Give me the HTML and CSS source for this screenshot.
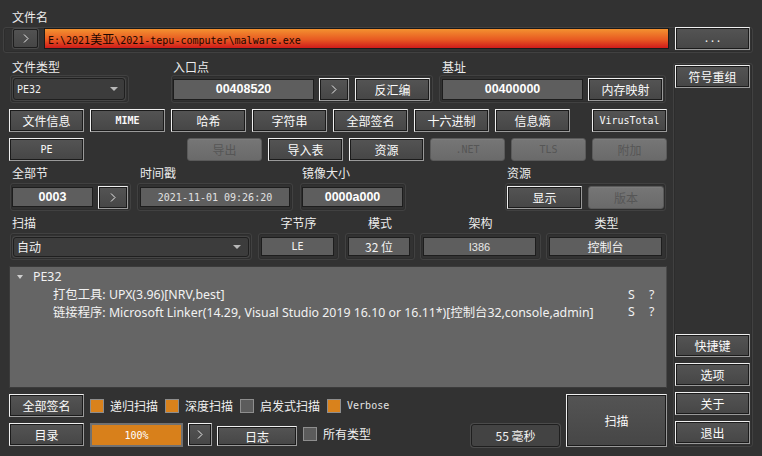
FILE: index.html
```html
<!DOCTYPE html>
<html>
<head>
<meta charset="utf-8">
<link rel="stylesheet" href="styles.css">
</head>
<body>
<div class="app">
  <div class="lbl top-lbl">文件名</div>
  <div class="frame path-frame">
    <div class="sbtn"><svg width="6" height="9" viewBox="0 0 6 9"><polyline points="1,0.5 5,4.5 1,8.5" fill="none" stroke="#e8e8e8" stroke-width="1"/></svg></div>
    <div class="path">E:\2021<span class="cj">美亚</span>\2021-tepu-computer\malware.exe</div>
    <div class="btn dots mono">...</div>
  </div>

  <div class="main">
    <div class="left">
      <!-- row 2 -->
      <div class="row r2">
        <div class="grp g2a">
          <div class="glbl pl2">文件类型</div>
          <div class="frame fr28">
            <div class="combo c-pe"><span class="mono">PE32</span><i class="arrow"></i></div>
          </div>
        </div>
        <div class="grp g2b">
          <div class="glbl pl2">入口点</div>
          <div class="frame fr28">
            <div class="field f-ep">00408520</div>
            <div class="btn chev"><svg width="6" height="9" viewBox="0 0 6 9"><polyline points="1,0.5 5,4.5 1,8.5" fill="none" stroke="#e8e8e8" stroke-width="1"/></svg></div>
            <div class="btn b-dis">反汇编</div>
          </div>
        </div>
        <div class="grp g2c">
          <div class="glbl pl3">基址</div>
          <div class="frame fr28">
            <div class="field f-base">00400000</div>
            <div class="btn b-mem">内存映射</div>
          </div>
        </div>
      </div>

      <!-- row 3 -->
      <div class="row r3">
        <div class="btn">文件信息</div>
        <div class="btn mono bold">MIME</div>
        <div class="btn">哈希</div>
        <div class="btn">字符串</div>
        <div class="btn">全部签名</div>
        <div class="btn">十六进制</div>
        <div class="btn">信息熵</div>
        <div class="btn mono vt">VirusTotal</div>
      </div>

      <!-- row 4 -->
      <div class="row r4">
        <div class="btn mono pe">PE</div>
        <div class="btn dis">导出</div>
        <div class="btn">导入表</div>
        <div class="btn">资源</div>
        <div class="btn dis mono">.NET</div>
        <div class="btn dis mono">TLS</div>
        <div class="btn dis">附加</div>
      </div>

      <!-- row 5 -->
      <div class="row r5">
        <div class="grp g5a">
          <div class="glbl gl17 pl2">全部节</div>
          <div class="frame fr28">
            <div class="field f-sec">0003</div>
            <div class="btn chev c5"><svg width="6" height="9" viewBox="0 0 6 9"><polyline points="1,0.5 5,4.5 1,8.5" fill="none" stroke="#e8e8e8" stroke-width="1"/></svg></div>
          </div>
        </div>
        <div class="grp g5b">
          <div class="glbl gl17 pl3">时间戳</div>
          <div class="frame fr28">
            <div class="field f-time mono">2021-11-01 09:26:20</div>
          </div>
        </div>
        <div class="grp g5c">
          <div class="glbl gl17 pl2">镜像大小</div>
          <div class="frame fr28">
            <div class="field f-img">0000a000</div>
          </div>
        </div>
        <div class="grp g5d">
          <div class="glbl gl17 pl2">资源</div>
          <div class="frame fr28">
            <div class="btn b-show">显示</div>
            <div class="btn dis b-ver">版本</div>
          </div>
        </div>
      </div>

      <!-- row 6 -->
      <div class="row r6">
        <div class="grp g6a">
          <div class="glbl gl17 pl2">扫描</div>
          <div class="frame fr27">
            <div class="combo c-auto"><span>自动</span><i class="arrow"></i></div>
          </div>
        </div>
        <div class="grp g6b">
          <div class="glbl gl17 ctr">字节序</div>
          <div class="frame fr27"><div class="field sm mono">LE</div></div>
        </div>
        <div class="grp g6c">
          <div class="glbl gl17 ctr">模式</div>
          <div class="frame fr27"><div class="field sm">32 位</div></div>
        </div>
        <div class="grp g6d">
          <div class="glbl gl17 ctr">架构</div>
          <div class="frame fr27"><div class="field sm arch">I386</div></div>
        </div>
        <div class="grp g6e">
          <div class="glbl gl17 ctr">类型</div>
          <div class="frame fr27"><div class="field sm">控制台</div></div>
        </div>
      </div>

      <!-- tree -->
      <div class="tree">
        <div class="trow"><i class="tri"></i><span class="tname">PE32</span></div>
        <div class="trow child"><span class="ttext">打包工具: UPX(3.96)[NRV,best]</span><span class="ts">S</span><span class="tq">?</span></div>
        <div class="trow child"><span class="ttext">链接程序: Microsoft Linker(14.29, Visual Studio 2019 16.10 or 16.11*)[控制台32,console,admin]</span><span class="ts">S</span><span class="tq">?</span></div>
      </div>

      <!-- bottom -->
      <div class="bottom">
        <div class="bleft">
          <div class="brow ra">
            <div class="btn">全部签名</div>
            <i class="cb on"></i><span class="cbl">递归扫描</span>
            <i class="cb on"></i><span class="cbl">深度扫描</span>
            <i class="cb"></i><span class="cbl">启发式扫描</span>
            <i class="cb on"></i><span class="cbl mono">Verbose</span>
          </div>
          <div class="brow rb">
            <div class="btn">目录</div>
            <div class="prog mono">100%</div>
            <div class="btn chev cb2"><svg width="6" height="9" viewBox="0 0 6 9"><polyline points="1,0.5 5,4.5 1,8.5" fill="none" stroke="#e8e8e8" stroke-width="1"/></svg></div>
            <div class="btn b-log">日志</div>
            <i class="cb cb-all"></i><span class="cbl">所有类型</span>
            <div class="ms">55 毫秒</div>
          </div>
        </div>
        <div class="btn scan">扫描</div>
      </div>
    </div>

    <div class="frame right">
      <div class="btn">符号重组</div>
      <div class="spacer"></div>
      <div class="btn">快捷键</div>
      <div class="btn">选项</div>
      <div class="btn">关于</div>
      <div class="btn">退出</div>
    </div>
  </div>
</div>
</body>
</html>
```

FILE: styles.css
```css
* { box-sizing: border-box; }
html, body { margin: 0; padding: 0; }
body {
  background: #323232;
  width: 762px;
  height: 456px;
  overflow: hidden;
  font-family: "Noto Sans CJK SC", "Liberation Sans", sans-serif;
  font-size: 12px;
  color: #ececec;
}
.app { padding-top: 9px; }
.lbl { line-height: 15px; height: 15px; }
.top-lbl { padding-left: 12px; }

.mono { font-family: "DejaVu Sans Mono", "Liberation Mono", "Noto Sans CJK SC", monospace; font-size: 10px; }
.bold { font-weight: bold; }

.frame {
  border: 1px solid #414141;
  border-radius: 3px;
  box-shadow: inset 0 0 0 1px #2d2d2d;
}

.path-frame {
  margin: 3px 0 0 3px;
  width: 750px;
  height: 26px;
  display: flex;
  align-items: flex-start;
}
.sbtn {
  margin: 1px 0 0 9px;
  width: 25px;
  height: 19px;
  border: 1px solid #1e1e1e;
  border-radius: 2px;
  background: linear-gradient(#525252, #464646);
  box-shadow: 0 0 0 1px #4a4a4a;
  display: flex; align-items: center; justify-content: center;
}
.path {
  margin-left: 6px;
  width: 625px;
  height: 21px;
  border: 1px solid #1a1a1a;
  background: linear-gradient(#f39130, #e85a22 55%, #cf1b1b);
  color: #1c0600;
  font-family: "DejaVu Sans Mono", "Liberation Mono", monospace;
  font-size: 10px;
  line-height: 19px;
  padding-left: 3px;
  white-space: nowrap;
}
.path .cj { font-family: "Noto Sans CJK SC", sans-serif; font-size: 12px; }
.dots { margin: -1px 0 0 6px; }

.btn {
  width: 75px;
  height: 23px;
  border: 1px solid;
  border-color: #f0f0f0 #9a9a9a #9a9a9a #f0f0f0;
  box-shadow: inset 0 0 0 1px #1b1b1b;
  background: linear-gradient(#545454, #464646);
  color: #fafafa;
  display: flex;
  align-items: center;
  justify-content: center;
  flex: none;
  white-space: nowrap;
}
.btn.dis {
  border: 1px solid #5a5a5a;
  border-radius: 3px;
  box-shadow: inset 0 1px 0 #7c7c7c;
  background: linear-gradient(#767676, #6a6a6a);
  color: #565656;
}
.btn.chev { width: 30px; }

.main { display: flex; align-items: flex-start; }
.left { margin-left: 9px; width: 658px; padding-top: 7px; display: flex; flex-direction: column; }
.right {
  margin: 10px 0 0 6px;
  width: 80px;
  height: 384px;
  display: flex;
  flex-direction: column;
  padding: 1px 0 2px 1px;
  gap: 6px;
}
.right .spacer { flex: 1; margin-top: -6px; }

.row { display: flex; align-items: flex-start; }
.grp { display: flex; flex-direction: column; flex: none; }
.glbl { height: 15px; line-height: 14px; white-space: nowrap; }
.gl17 { height: 17px; }
.pl2 { padding-left: 2px; }
.pl3 { padding-left: 3px; }
.ctr { text-align: center; }

.fr28 { height: 28px; display: flex; align-items: center; }
.fr27 { height: 27px; display: flex; align-items: center; }

.g2a { margin-left: 1px; width: 119px; }
.g2b { margin-left: 42px; width: 262px; }
.g2c { margin-left: 6px; width: 227px; }

.combo {
  height: 22px;
  border: 1px solid #1f1f1f;
  border-radius: 3px;
  background: #3c3c3c;
  box-shadow: 0 0 0 1px #464646;
  display: flex;
  align-items: center;
  padding-left: 3px;
  position: relative;
  color: #f0f0f0;
}
.c-pe { margin-left: 2px; width: 112px; }
.arrow {
  position: absolute;
  right: 6px;
  top: 8px;
  width: 0; height: 0;
  border-left: 4px solid transparent;
  border-right: 4px solid transparent;
  border-top: 4px solid #b8b8b8;
}

.field {
  height: 21px;
  border: 1px solid #1d1d1d;
  background: #5e5e5e;
  color: #fff;
  font-family: "Liberation Sans", sans-serif;
  font-weight: bold;
  font-size: 12.5px;
  display: flex;
  align-items: center;
  justify-content: center;
  flex: none;
}
.f-ep { margin-left: 1px; width: 141px; }
.g2b .chev { margin-left: 5px; }
.b-dis { margin-left: 6px; }
.f-base { margin-left: 2px; width: 141px; }
.b-mem { margin-left: 5px; }

.r3 { margin-top: 6px; gap: 6px; }
.r3 .vt { margin-left: auto; }
.r4 { margin-top: 6px; gap: 6px; justify-content: flex-end; }
.r4 .pe { margin-right: auto; }

.r5 { margin-top: 5px; }
.g5a { margin-left: 1px; width: 121px; }
.g5b { margin-left: 6px; width: 156px; }
.g5c { margin-left: 7px; width: 106px; }
.g5d { margin-left: 99px; width: 161px; }
.f-sec { margin-left: 1px; width: 81px; height: 20px; }
.c5 { margin-left: 5px; }
.f-time { margin-left: 2px; width: 150px; height: 20px; font-weight: normal; color: #e2e2e2; font-family: "DejaVu Sans Mono", monospace; font-size: 10px; }
.f-img { margin-left: 1px; width: 101px; height: 20px; }
.b-show { margin-left: 1px; }
.b-ver { margin-left: 6px; width: 76px; }

.r6 { margin-top: 5px; }
.g6a { margin-left: 1px; width: 242px; }
.g6b { margin-left: 6px; width: 81px; }
.g6c { margin-left: 6px; width: 70px; }
.g6d { margin-left: 5px; width: 121px; }
.g6e { margin-left: 5px; width: 121px; }
.c-auto { margin-left: 2px; width: 236px; height: 20px; }
.c-auto .arrow { top: 7px; right: 7px; }
.field.sm {
  margin-left: 2px;
  width: calc(100% - 6px);
  height: 19px;
  font-family: "Noto Sans CJK SC", sans-serif;
  font-weight: normal;
  font-size: 12px;
  color: #f4f4f4;
}
.field.sm.mono { font-family: "DejaVu Sans Mono", monospace; font-size: 10px; }
.field.arch { font-family: "Liberation Sans", sans-serif; font-size: 11px; color: #e8e8e8; }

.tree {
  margin-top: 6px;
  height: 122px;
  background: #656565;
  border: 1px solid #3b3b3b;
  border-right-color: #4a4a4a;
  padding-top: 1px;
  font-family: "Noto Sans", "Noto Sans CJK SC", sans-serif;
  font-size: 12.35px;
  color: #f2f2f2;
}
.trow { height: 17.5px; display: flex; align-items: center; white-space: nowrap; }
.tri {
  margin-left: 7px;
  width: 0; height: 0;
  border-left: 3px solid transparent;
  border-right: 3px solid transparent;
  border-top: 4px solid #cfcfcf;
}
.tname { margin-left: 10px; }
.child { padding-left: 43px; padding-right: 10px; }
.ttext { flex: 1; }
.ts { width: 21px; }
.tq { width: 7px; }

.bottom { margin-top: 6px; display: flex; align-items: flex-start; }
.bleft { width: 551px; display: flex; flex-direction: column; }
.brow { display: flex; align-items: center; }
.ra { height: 23px; }
.rb { margin-top: 6px; height: 25px; align-items: flex-start; }
.cb {
  width: 14px; height: 14px;
  border: 1px solid #8e8e8e;
  background: #5c5c5c;
  flex: none;
  margin-left: 6px;
}
.cb.on { background: #d9821c; }
.ra .cb { margin-left: 7px; }
.ra .btn + .cb { margin-left: 6px; }
.cbl { margin-left: 6px; white-space: nowrap; color: #f0f0f0; }
.cbl.mono { color: #e4e4e4; }

.prog {
  margin-left: 6px;
  width: 93px;
  height: 24px;
  border: 2px solid #717171;
  background: #d8801b;
  color: #fff;
  display: flex;
  align-items: center;
  justify-content: center;
}
.btn.cb2 { margin-left: 5px; width: 24px; }
.b-log { margin: 3px 0 0 5px; width: 80px; height: 20px; }
.cb-all { margin-top: 4px; margin-left: 6px; }
.rb .cbl { line-height: 22px; }
.ms {
  margin: 1px 0 0 auto;
  width: 89px;
  height: 23px;
  border: 1px solid #1f1f1f;
  border-radius: 3px;
  background: #434343;
  box-shadow: 0 0 0 1px #4b4b4b;
  color: #f2f2f2;
  display: flex;
  align-items: center;
  justify-content: center;
}
.scan { margin-left: 6px; width: 101px; height: 53px; }
```
